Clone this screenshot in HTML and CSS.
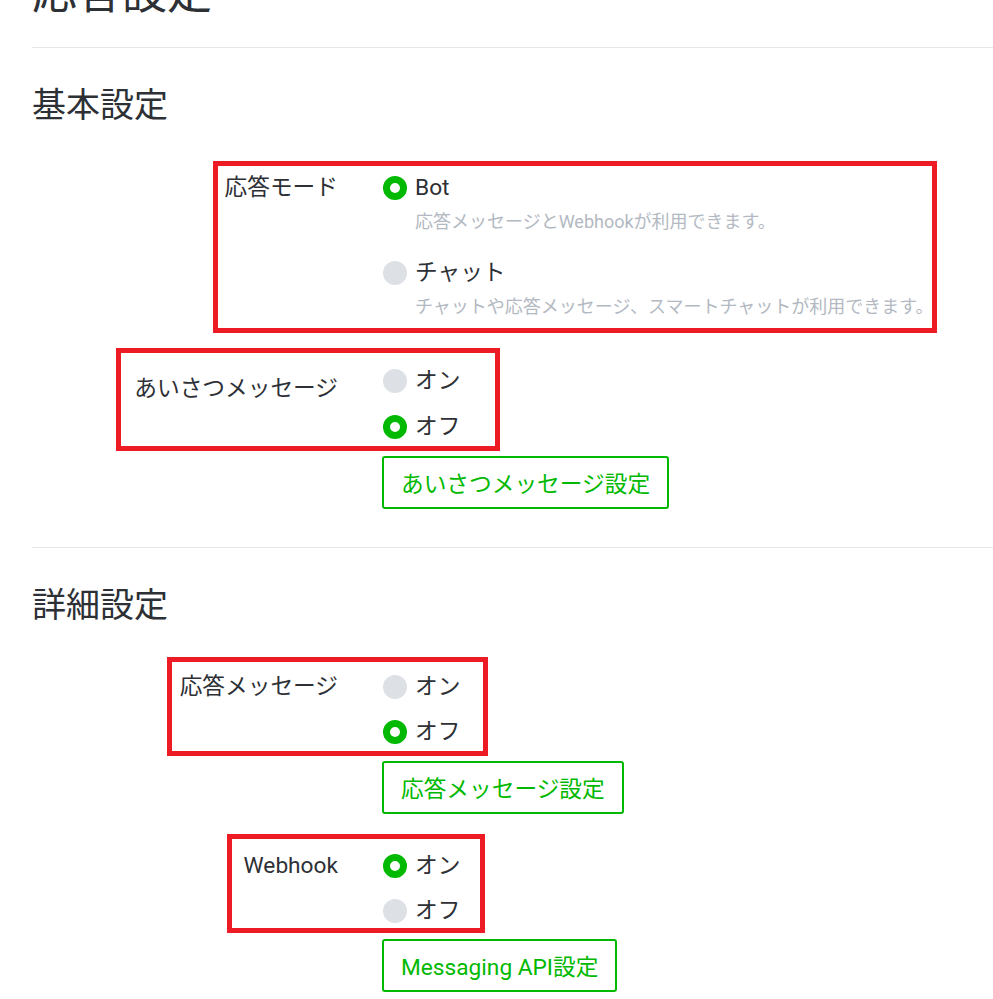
FILE: index.html
```html
<!DOCTYPE html>
<html lang="ja">
<head>
<meta charset="utf-8">
<title>応答設定</title>
<link rel="stylesheet" href="styles.css">
</head>
<body>
<main class="page">
  <h1 class="page-title">応答設定</h1>

  <section class="section section--first">
    <h2 class="section-title">基本設定</h2>

    <div class="group group--first">
      <div class="field-row">
        <div class="field-label">応答モード</div>
        <div class="options options--described">
          <div class="option">
            <div class="option-main"><span class="radio is-checked"></span><span>Bot</span></div>
            <p class="option-note">応答メッセージとWebhookが利用できます。</p>
          </div>
          <div class="option">
            <div class="option-main"><span class="radio"></span><span>チャット</span></div>
            <p class="option-note">チャットや応答メッセージ、スマートチャットが利用できます。</p>
          </div>
        </div>
        <span class="mark mark--mode"></span>
      </div>
    </div>

    <div class="group group--after-notes">
      <div class="field-row">
        <div class="field-label field-label--low">あいさつメッセージ</div>
        <div class="options options--loose">
          <div class="option-main"><span class="radio"></span><span>オン</span></div>
          <div class="option-main"><span class="radio is-checked"></span><span>オフ</span></div>
        </div>
        <span class="mark mark--greeting"></span>
      </div>
      <div class="actions"><button class="btn" type="button">あいさつメッセージ設定</button></div>
    </div>
  </section>

  <section class="section section--second">
    <h2 class="section-title">詳細設定</h2>

    <div class="group group--first">
      <div class="field-row">
        <div class="field-label">応答メッセージ</div>
        <div class="options">
          <div class="option-main"><span class="radio"></span><span>オン</span></div>
          <div class="option-main"><span class="radio is-checked"></span><span>オフ</span></div>
        </div>
        <span class="mark mark--reply"></span>
      </div>
      <div class="actions"><button class="btn" type="button">応答メッセージ設定</button></div>
    </div>

    <div class="group group--after-button">
      <div class="field-row">
        <div class="field-label">Webhook</div>
        <div class="options">
          <div class="option-main"><span class="radio is-checked"></span><span>オン</span></div>
          <div class="option-main"><span class="radio"></span><span>オフ</span></div>
        </div>
        <span class="mark mark--webhook"></span>
      </div>
      <div class="actions actions--tight"><button class="btn" type="button">Messaging API設定</button></div>
    </div>
  </section>
</main>
</body>
</html>
```

FILE: styles.css
```css
html, body {
  margin: 0;
  padding: 0;
  background: #ffffff;
  overflow: hidden;
}

body {
  font-family: Roboto, "Noto Sans CJK JP", sans-serif;
  color: #2d3035;
}

.page {
  padding-left: 32px;
}

.page-title {
  margin: -33px 0 0;
  font-size: 45px;
  line-height: 54px;
  font-weight: 400;
}

.section {
  border-top: 1px solid #e4e6e9;
  padding-top: 38px;
}

.section--first {
  margin-top: 26px;
}

.section--second {
  margin-top: 38px;
}

.section-title {
  margin: 0;
  font-size: 34px;
  line-height: 38px;
  font-weight: 400;
}

.group--first {
  margin-top: 48px;
}

.section--second .group--first {
  margin-top: 47px;
}

.group--after-notes {
  margin-top: 45px;
}

.group--after-button {
  margin-top: 36px;
}

.field-row {
  position: relative;
  display: grid;
  grid-template-columns: 306px auto;
  column-gap: 45px;
  align-items: start;
}

.field-label {
  text-align: right;
  font-size: 22.7px;
  line-height: 32px;
}

.field-label--low {
  padding-top: 8px;
}

.options {
  display: flex;
  flex-direction: column;
  gap: 13px;
}

.options--loose {
  gap: 14px;
}

.options--described {
  gap: 22px;
}

.option-main {
  display: flex;
  align-items: center;
  gap: 8px;
  font-size: 22.7px;
  line-height: 32px;
}

.radio {
  flex: none;
  width: 24px;
  height: 24px;
  box-sizing: border-box;
  border-radius: 50%;
  background: #dde0e5;
}

.radio.is-checked {
  background: #ffffff;
  border: 7px solid #00b900;
}

.option-note {
  margin: 5px 0 0 32px;
  font-size: 18px;
  line-height: 26px;
  color: #b3b9c2;
}

.actions {
  margin-top: 13px;
  padding-left: 350px;
}

.actions--tight {
  margin-top: 12px;
}

.btn {
  display: inline-flex;
  align-items: center;
  height: 53px;
  box-sizing: border-box;
  padding: 0 17px;
  border: 2px solid #00b900;
  border-radius: 3px;
  background: #ffffff;
  color: #00b900;
  font-family: inherit;
  font-size: 22.7px;
  cursor: pointer;
}

.mark {
  position: absolute;
  box-sizing: border-box;
  border: 5px solid #ed1c24;
  pointer-events: none;
}

.mark--mode {
  left: 181px;
  top: -11px;
  width: 724px;
  height: 172px;
}

.mark--greeting {
  left: 84px;
  top: -17px;
  width: 384px;
  height: 103px;
}

.mark--reply {
  left: 135px;
  top: -14px;
  width: 321px;
  height: 99px;
}

.mark--webhook {
  left: 195px;
  top: -16px;
  width: 258px;
  height: 99px;
}
```
